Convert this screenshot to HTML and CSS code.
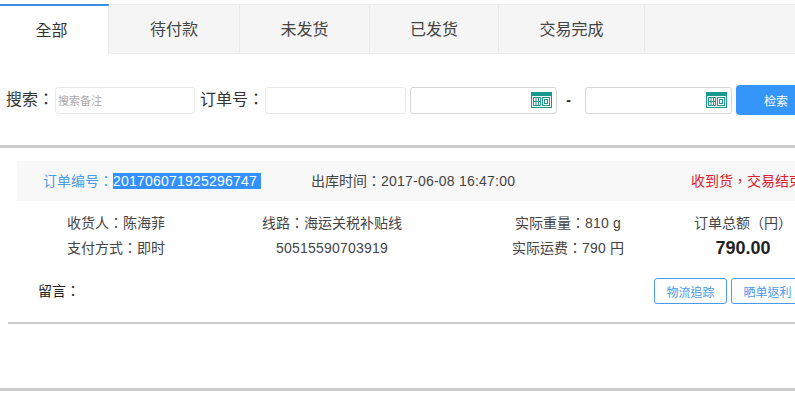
FILE: index.html
```html
<!DOCTYPE html>
<html>
<head>
<meta charset="utf-8">
<title>订单</title>
<link rel="stylesheet" href="styles.css">
</head>
<body>
<div class="page">
  <nav class="tabs">
    <a class="tab tab-active tab-w1">全部</a>
    <a class="tab tab-w2">待付款</a>
    <a class="tab tab-w3">未发货</a>
    <a class="tab tab-w4">已发货</a>
    <a class="tab tab-w5">交易完成</a>
  </nav>
  <form class="search">
    <label class="search-label">搜索：</label>
    <div class="input input-note"><span class="placeholder">搜索备注</span></div>
    <label class="search-label label-order">订单号：</label>
    <div class="input input-order"></div>
    <div class="input input-date">
      <svg class="cal" viewBox="0 0 21 16" width="21" height="16"><rect width="21" height="16" fill="#159a8c"/><rect x="1" y="4" width="19" height="11" fill="#f1f8f7"/><path d="M2.5 5.5h7v8h-7zM5 5.5v8M7.5 5.5v8M2.5 9.5h7" stroke="#2b9488" fill="none"/><rect x="11.5" y="5.5" width="7" height="8" fill="none" stroke="#2b9488"/><rect x="13.5" y="7.5" width="3" height="4" fill="none" stroke="#2b9488"/></svg>
    </div>
    <span class="dash">-</span>
    <div class="input input-date">
      <svg class="cal" viewBox="0 0 21 16" width="21" height="16"><rect width="21" height="16" fill="#159a8c"/><rect x="1" y="4" width="19" height="11" fill="#f1f8f7"/><path d="M2.5 5.5h7v8h-7zM5 5.5v8M7.5 5.5v8M2.5 9.5h7" stroke="#2b9488" fill="none"/><rect x="11.5" y="5.5" width="7" height="8" fill="none" stroke="#2b9488"/><rect x="13.5" y="7.5" width="3" height="4" fill="none" stroke="#2b9488"/></svg>
    </div>
    <button class="btn-search" type="button">检索</button>
  </form>
  <section class="order">
    <header class="order-head">
      <span class="order-no">订单编号：<span class="selected num">201706071925296747&nbsp;</span></span>
      <span class="order-time">出库时间：<span class="num">2017-06-08 16:47:00</span></span>
      <span class="order-status">收到货，交易结束</span>
    </header>
    <div class="order-body">
      <div class="col col-a"><p>收货人：陈海菲</p><p>支付方式：即时</p></div>
      <div class="col col-b"><p>线路：海运关税补贴线</p><p class="num">50515590703919</p></div>
      <div class="col col-c"><p>实际重量：<span class="num">810 g</span></p><p>实际运费：<span class="num">790</span> 円</p></div>
      <div class="col col-d"><p>订单总额（円）</p><p class="total">790.00</p></div>
    </div>
    <div class="order-foot">
      <span class="note">留言：</span>
      <div class="actions"><a class="action">物流追踪</a><a class="action">晒单返利</a></div>
    </div>
  </section>
  <div class="empty"></div>
</div>
</body>
</html>
```
FILE: styles.css
```css
* { box-sizing: border-box; }
html, body { margin: 0; padding: 0; background: #fff; overflow: hidden; }
body { width: 795px; height: 417px; font-family: "Liberation Sans", "Noto Sans CJK TC", sans-serif; color: #333; }
p { margin: 0; }
.page { width: 795px; height: 417px; overflow: hidden; padding-top: 4px; }
.num { letter-spacing: 0.22px; }

.tabs { display: flex; width: 795px; height: 50px; background: #f5f5f5; border-top: 1px solid #eee; border-bottom: 1px solid #eee; }
.tab { display: flex; align-items: center; justify-content: center; font-size: 16px; line-height: 20px; color: #444; border-right: 1px solid #eaeaea; height: 48px; padding-top: 2px; }
.tab-active { background: #fff; box-shadow: 0 -1px 0 #3a8ee6; border-top: 1px solid #3a8ee6; color: #333; height: 49px; padding-right: 5px; padding-top: 1px; }
.tab-w1 { width: 109px; }
.tab-w2 { width: 131px; }
.tab-w3 { width: 130px; }
.tab-w4 { width: 129px; }
.tab-w5 { width: 146px; }

.search { display: flex; align-items: center; width: 900px; height: 30px; margin-top: 31px; padding-left: 6px; }
.search-label { font-size: 16px; line-height: 20px; color: #333; white-space: nowrap; width: 49px; }
.label-order { width: 65px; margin-left: 5px; }
.input { height: 27px; border: 1px solid #e8e8e8; border-radius: 3px; background: #fff; display: flex; align-items: center; }
.input-note { width: 140px; padding-left: 2px; }
.placeholder { font-size: 11px; color: #aaa; }
.input-order { width: 141px; }
.input-date { width: 147px; margin-left: 4px; justify-content: flex-end; padding-right: 4px; border-color: #d5d5d5; }
.cal { display: block; }
.dash { width: 29px; text-align: center; font-weight: bold; font-size: 14px; color: #222; margin-left: -3px; margin-right: -2px; }
.btn-search { width: 100px; height: 30px; margin-left: 4px; border: 0; border-radius: 4px; background: #3396f8; color: #fff; font: 12px "Liberation Sans", "Noto Sans CJK TC", sans-serif; text-align: left; padding-left: 28px; }

.order { margin-top: 30px; height: 177px; border-top: 3px solid #ccc; width: 795px; }
.order-head { display: flex; align-items: center; width: 795px; height: 40px; margin: 13px 0 0 17px; background: #f8f8f8; font-size: 14px; color: #444; white-space: nowrap; padding-bottom: 2px; }
.order-no { margin-left: 26px; color: #4a9be8; width: 268px; }
.selected { background: #3390ff; color: #fff; }
.order-time { width: 380px; }
.order-status { color: #d9202c; }
.order-body { display: grid; grid-template-columns: 172px 320px 152px 198px; width: 842px; margin-top: 10px; font-size: 14px; color: #444; }
.col p { line-height: 25px; height: 25px; white-space: nowrap; }
.col-a { padding-left: 67px; }
.col-b, .col-c, .col-d { text-align: center; }
.total { font-size: 18px; font-weight: bold; color: #222; }
.order-foot { display: flex; align-items: center; justify-content: space-between; width: 853px; margin-top: 17px; padding-left: 38px; }
.note { font-size: 14px; line-height: 20px; color: #222; }
.actions { display: flex; gap: 4px; width: 199px; }
.action { display: flex; align-items: center; justify-content: center; width: 73px; height: 26px; font-size: 12px; color: #4a9be8; border: 1px solid #4a9be8; border-radius: 3px; }
.empty { width: 795px; height: 69px; border-bottom: 3px solid #ccc; }
.empty::before { content: ""; display: block; height: 2px; margin-left: 8px; background: #ccc; }
```
